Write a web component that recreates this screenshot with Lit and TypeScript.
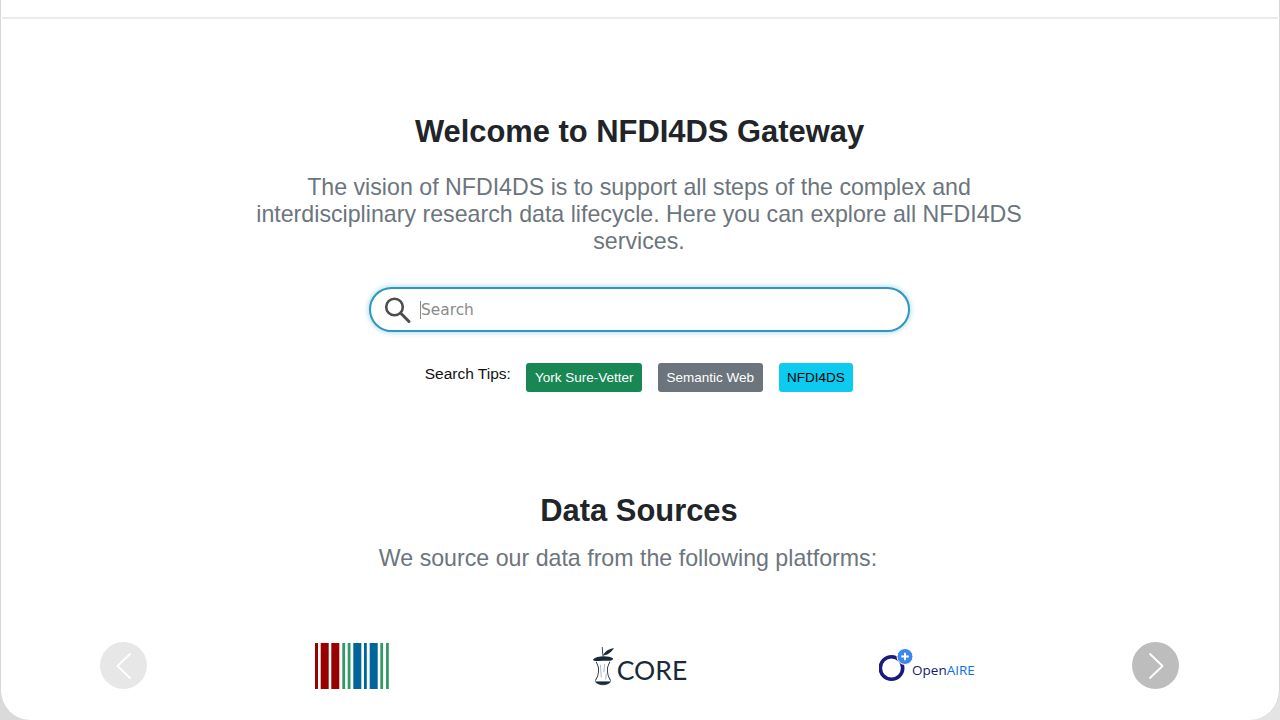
import { LitElement, html, css, svg } from "lit";
import { customElement } from "lit/decorators.js";

const bars: [number, number, string][] = [
  [0, 3, "#990000"], [5.7, 8, "#990000"], [16.3, 8, "#990000"],
  [27.3, 2.8, "#339966"], [32.7, 2.8, "#339966"],
  [38.3, 8, "#006699"], [49, 2.8, "#006699"], [54.7, 8, "#006699"],
  [65.3, 2.8, "#339966"], [71, 2.8, "#339966"],
];

@customElement("app-root")
export class AppRoot extends LitElement {
  static styles = css`
    :host {
      display: block;
      width: 1280px;
      height: 720px;
      overflow: hidden;
      background: linear-gradient(135deg, #d4d4d4, #e4e4e4);
      font-family: "Liberation Sans", Arial, sans-serif;
    }
    .frame {
      height: 720px;
      box-sizing: border-box;
      background: #fff;
      border-left: 1px solid #d6d6d6;
      border-right: 1px solid #d6d6d6;
      border-radius: 0 0 30px 30px;
      display: flex;
      flex-direction: column;
      overflow: hidden;
    }
    .topbar {
      height: 17px;
      flex: none;
      border-bottom: 2px solid #e9ebec;
      margin-left: 1px;
      margin-right: 1px;
    }
    main {
      display: flex;
      flex-direction: column;
      align-items: center;
      flex: 1;
    }
    h1, h2 {
      margin: 0;
      color: #212529;
      font-weight: 700;
      font-size: 30.9px;
      line-height: 38px;
      text-align: center;
    }
    h1 { margin-top: 94px; margin-left: -1px; }
    h2 { margin-top: 100px; margin-left: -2px; }
    p {
      margin: 0;
      color: #6c757d;
      font-size: 23.2px;
      line-height: 27px;
      text-align: center;
    }
    .lead { width: 780px; margin-top: 23px; margin-left: -2px; }
    .sub { margin-top: 15px; margin-left: -24px; }
    .search {
      width: 541px;
      height: 45px;
      margin-top: 32px;
      margin-left: -1px;
      box-sizing: border-box;
      display: flex;
      align-items: center;
      gap: 8px;
      padding-left: 13px;
      border: 2px solid #2f97bb;
      border-radius: 23px;
      box-shadow: 0 0 5px 1px rgba(60, 170, 210, 0.4);
      background: #fff;
    }
    .search svg { flex: none; }
    .field {
      border-left: 1px solid #8a8a8a;
      height: 18px;
      display: flex;
      align-items: center;
      font-family: "DejaVu Sans", Verdana, sans-serif;
      font-size: 15.4px;
      color: #8b8b8b;
    }
    .tips {
      display: flex;
      align-items: flex-start;
      margin-top: 31px;
      margin-left: -2px;
      height: 29px;
    }
    .tips span.label {
      font-size: 15.5px;
      line-height: 21px;
      color: #111;
      margin-right: 15.5px;
    }
    .tag {
      height: 29px;
      box-sizing: border-box;
      padding: 0 8.5px;
      display: flex;
      align-items: center;
      font-size: 13.5px;
      border-radius: 3px;
      margin-right: 16px;
    }
    .tag:last-child { margin-right: 0; }
    .green { background: #198754; color: #fff; }
    .gray { background: #6c757d; color: #fff; }
    .cyan { background: #0dcaf0; color: #000; }
    .carousel {
      align-self: stretch;
      margin-top: 70px;
      padding: 0 100px 0 99px;
      display: flex;
      align-items: center;
      justify-content: space-between;
    }
    .arrow {
      width: 47px;
      height: 47px;
      border-radius: 50%;
      display: flex;
      align-items: center;
      justify-content: center;
      flex: none;
    }
    .prev { background: #e7e7e7; }
    .next { background: #bdbdbd; }
    .track { display: flex; justify-content: center; flex: 1; }
    .cell {
      width: 287.5px;
      height: 47px;
      display: flex;
      align-items: center;
      justify-content: center;
    }
    .core { color: #1b2a3a; font-family: "Lato", sans-serif; font-size: 26.5px; font-weight: 400; }
    .core span { margin-top: 9px; margin-left: 3px; }
    .core svg { margin-top: 3px; }
    .openaire { font-family: "Open Sans", sans-serif; font-size: 13.5px; }
    .openaire span { margin-top: 8px; margin-left: -1px; color: #14206f; }
    .openaire b { font-weight: 400; color: #0f6fe8; }
    .openaire svg { margin-top: -2px; }
  `;

  render() {
    return html`
      <div class="frame">
        <div class="topbar"></div>
        <main>
          <h1>Welcome to NFDI4DS Gateway</h1>
          <p class="lead">The vision of NFDI4DS is to support all steps of the complex and interdisciplinary research data lifecycle. Here you can explore all NFDI4DS services.</p>
          <div class="search">
            <svg width="28" height="28" viewBox="0 0 28 28" fill="none" stroke="#4d4d4d">
              <circle cx="10.5" cy="11" r="8.3" stroke-width="2.6"></circle>
              <path d="M16.8 17.3 L25 25.5" stroke-width="3" stroke-linecap="round"></path>
            </svg>
            <div class="field">Search</div>
          </div>
          <div class="tips">
            <span class="label">Search Tips:</span>
            <div class="tag green">York Sure-Vetter</div>
            <div class="tag gray">Semantic Web</div>
            <div class="tag cyan">NFDI4DS</div>
          </div>
          <h2>Data Sources</h2>
          <p class="sub">We source our data from the following platforms:</p>
          <div class="carousel">
            <div class="arrow prev">
              <svg width="20" height="32" viewBox="0 0 20 32" fill="none" stroke="#fff" stroke-width="1.8" stroke-linecap="round" stroke-linejoin="round"><path d="M16 4 L3.5 16 L16 28"></path></svg>
            </div>
            <div class="track">
              <div class="cell">
                <svg width="74" height="46" viewBox="0 0 74 46">
                  ${bars.map(([x, w, c]) => svg`<rect x=${x} y="0" width=${w} height="46" fill=${c}></rect>`)}
                </svg>
              </div>
              <div class="cell core">
                <svg width="22" height="42" viewBox="0 0 26 40" preserveAspectRatio="none" fill="none" stroke="#1b2a3a">
                  <path d="M12 1 L13 10" stroke-width="1"></path>
                  <path d="M13 9 C16 4 21 3 26 2 C23 6 18 9 13 9 Z" fill="#1b2a3a" stroke="none"></path>
                  <path d="M1 13 C6 9 20 9 25 12 C24 15 20 14 13 14 C7 14 3 15 1 13 Z" fill="#1b2a3a" stroke="none"></path>
                  <path d="M5 15 C9 21 9 27 4 33 M21 15 C17 21 17 27 22 33" stroke-width="1"></path>
                  <path d="M10 18 L11 30 M15 17 L14 25 M17 26 L16 32" stroke-width="0.7" stroke="#8a939c"></path>
                  <path d="M4 34 C8 38 18 38 22 34 C18 34 8 34 4 34 Z" fill="#1b2a3a" stroke="#1b2a3a" stroke-width="0.6"></path>
                </svg>
                <span>CORE</span>
              </div>
              <div class="cell openaire">
                <svg width="34" height="34" viewBox="0 0 34 34" fill="none">
                  <circle cx="12.5" cy="20" r="11.2" stroke="#1a1a80" stroke-width="3.6"></circle>
                  <circle cx="26" cy="8.5" r="8" fill="#3f86e8" stroke="#fff" stroke-width="1"></circle>
                  <path d="M22.2 8.5 H29.8 M26 4.7 V12.3" stroke="#fff" stroke-width="1.9"></path>
                </svg>
                <span>Open<b>AIRE</b></span>
              </div>
            </div>
            <div class="arrow next">
              <svg width="20" height="32" viewBox="0 0 20 32" fill="none" stroke="#fff" stroke-width="1.8" stroke-linecap="round" stroke-linejoin="round"><path d="M4 4 L16.5 16 L4 28"></path></svg>
            </div>
          </div>
        </main>
      </div>
    `;
  }
}
